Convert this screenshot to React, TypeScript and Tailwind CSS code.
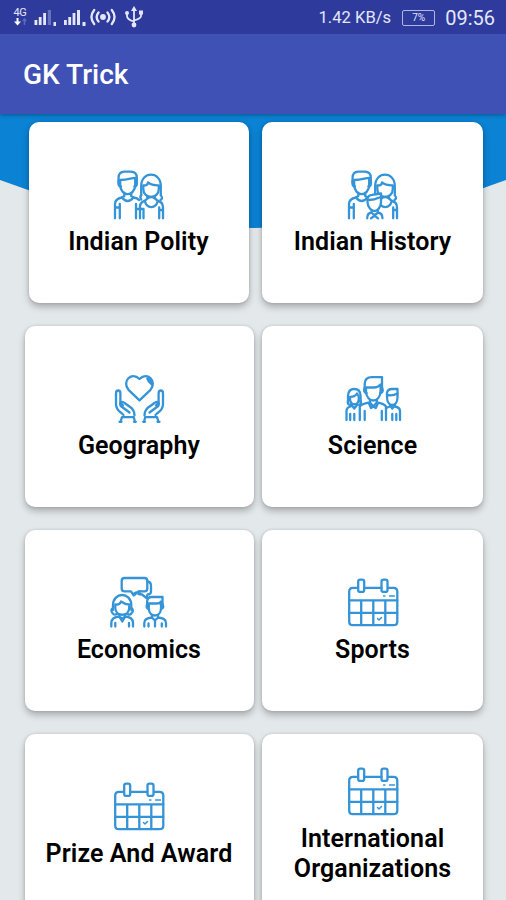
import type { ReactNode } from "react";

interface Topic {
  title: string;
  icon: ReactNode;
  className?: string;
}

function TopicIcon({ children }: { children: ReactNode }) {
  return (
    <svg
      viewBox="0 0 60 52"
      className="h-[52px] w-[60px] shrink-0"
      fill="none"
      stroke="#3594d7"
      strokeWidth="2.3"
      strokeLinecap="round"
      strokeLinejoin="round"
    >
      {children}
    </svg>
  );
}

function Parents() {
  return (
    <>
      <path d="M9.6 14V9.5Q9.6 4 15.3 3.6H22Q27.8 4 27.8 9.5V14" />
      <path d="M11.2 12V17C11.2 23 15.5 26.2 18.7 26.2S26.2 23 26.2 17V9.8C22 10 19 12 11.2 12" />
      <path d="M9.6 12.5Q8.6 18.5 12 18.5M27.8 12.5Q28.8 18.5 25.4 18.5" />
      <path d="M15.3 25V28L13 29.5Q18.5 36.5 24.5 29.5L22.2 28V25" />
      <path d="M13 29.5C7.5 30.5 6 33 6 36V50.3M10.8 50.3V36M6 39.5H10.8M24.5 29.5Q28.5 30.2 30 32" />
      <path d="M32.2 27.5V18C32.2 2.8 51.8 2.8 51.8 18V27.5Q54.5 30 51.5 32" />
      <path d="M34.3 17.3Q38.5 18 39 14.5Q43 17.5 49.8 17.3V21C49.8 31.5 34.3 31.5 34.3 21Z" />
      <path d="M32.2 27Q30.5 29 32.2 31.5M38.3 28.5V30.5L35.8 32.8C37.5 41.2 47 41.2 48.8 32.8L46 30.5V28.5M38.3 30.5Q42.2 27.5 46 30.5" />
      <path d="M49 33Q54 34 54 39.5V50.3M50.2 50.3V39.5M50.2 42H54" />
    </>
  );
}

function CoupleIcon() {
  return (
    <TopicIcon>
      <Parents />
      <path d="M35.8 32.8Q31 34 31 38.5V50.3M27 36V50.3M34.5 41V50.3M27 41H34.5" />
    </TopicIcon>
  );
}

function FamilyIcon() {
  return (
    <TopicIcon>
      <Parents />
      <path
        d="M24.5 34V31Q25 27 29 26.8L38 25.5V34C38 40 34 43 31.5 43S24.5 40 24.5 34Z"
        fill="white"
      />
      <path d="M26 32Q31 32 36.5 29.5M28.6 42V44.5Q31.5 49 34.8 44.5V42M28.6 44.5Q24.2 45 24.2 50.3M34.8 44.5Q39.5 45 39.5 50.3M28 50.3L31.5 47.5L35 50.3" />
    </TopicIcon>
  );
}

function HandsHeartIcon() {
  return (
    <TopicIcon>
      <path d="M30.5 28.3L19.5 17.8C12.5 9.5 22.5-1 30.5 7C38.5-1 48.5 9.5 41.5 17.8Z" />
      <path d="M38.3 6.5Q43 8.5 42.8 12.5L39.8 9.5Z" fill="#3594d7" />
      {[false, true].map((flip) => (
        <g key={String(flip)} transform={flip ? "translate(61 0) scale(-1 1)" : undefined}>
          <path d="M14.5 43C9.5 38.5 7 37 7 32V21.5Q7 18.5 9.2 18.5T11.4 21.5V30.5L14 33.5" />
          <path d="M20.5 40.5L16.5 37.5L11.7 34C10 30.5 13 28.5 15.5 31L22.5 36Q25.5 39 25.5 43.5" />
          <path d="M11.5 49.8L13 45.2H24.8L26 49.8M10.5 49.8H12.5M25 49.8H26.8" />
        </g>
      ))}
    </TopicIcon>
  );
}

function TeamIcon() {
  return (
    <TopicIcon>
      <path d="M21.7 19V12C21.7 7 25 5.2 29 5.2H39V19" />
      <path d="M23 15.5H31Q35 15.5 37.6 12.5V19C37.6 25.5 33.5 28.5 30.3 28.5S23 25.5 23 19Z" />
      <path d="M21.7 15.5Q20 20.5 23.5 21M39 15.5Q41 20.5 37.3 21M27 28V30.5L30.3 34.5L33.8 30.5V28" />
      <path d="M27 30.5Q19 31.5 16.8 34.5V48M33.8 30.5Q41 31.5 43 34.5V48M21.7 39V48M38.8 39V48" />
      <path d="M26 31.5L28 36L30.3 34.5L32.8 36L34.8 31.5" />
      <path d="M5 31V24Q5.2 17 11.3 17T17.6 24V31" />
      <path d="M7 24.8Q12 25 14 21.5L15.8 24.5V27C15.5 34 7.3 34 7 27ZM5 29Q4 33 8 33M17.6 29Q19 32 16 33" />
      <path d="M8.5 33L11.3 36.5L14 33M7.5 34.5Q3.5 35.5 3.5 39V48M7.2 48V42M11.3 42V48" />
      <path d="M44 25V20.5Q45 17 49 17H54.5V25C54.5 31 51.5 33 49.3 33S44 31 44 25Z" />
      <path d="M44 23Q50 24 54.5 21.5M47 33L49.3 36.5L52 33M52 34.5Q57 35.5 57 39V48M53.3 48V42M49.3 42V48M47 34.5L43 36" />
    </TopicIcon>
  );
}

function DiscussionIcon() {
  return (
    <TopicIcon>
      <path d="M15.5 2H35.5Q38.3 2 38.3 4.8V12.5Q38.3 15.3 35.5 15.3H29.5L24.8 19.5L22 15.3H15.5Q12.7 15.3 12.7 12.5V4.8Q12.7 2 15.5 2Z" />
      <path d="M38.3 5.5Q42 6 42 9.5V15.5Q42 18.5 38.5 18.5L37.5 22L33 18.5L29.5 18L31 15.3M24.5 18L27 16.5" />
      <path d="M4 34V29.5C4 15.5 22.3 15.5 22.3 29.5V34" />
      <path d="M6.3 28.5Q11 29 12 25.5Q16 28.5 20.2 28.5V32C20.2 41 6.3 41 6.3 32Z" />
      <path d="M4 32Q.8 34 3.8 37.5Q5 39.5 8 38M22.3 32Q25.5 34 22.3 37.5Q21 39.5 18.5 38M10.5 38.5V40.5Q13.3 44 16 40.5V38.5" />
      <path d="M10.5 40.5Q2.3 41 2.3 47V50.5M16 40.5Q24 41 24 47V50.5M6.3 47V50.5M20 47V50.5M10.5 41L13.3 45.5L16 41" />
      <path d="M38.2 31V25Q38.6 21 42.5 21H53.5V31" />
      <path d="M39.8 27.5H47.5Q51 27.5 52 25.5V32C52 37.5 48.7 39.5 46 39.5S39.8 37.5 39.8 32ZM38.2 28Q36.5 32.5 40 33M53.5 28Q55.5 32.5 52 33" />
      <path d="M43 39V41.5L46 44.5L49 41.5V39M43 41.5Q35.3 42 35.3 47V50.5M49 41.5Q57 42 57 47V50.5M39.5 47.5V50.5M52.8 47.5V50.5M46 44.5V50.5" />
    </TopicIcon>
  );
}

function CalendarIcon() {
  return (
    <TopicIcon>
      <path d="M15 11.8H10Q6.2 11.8 6.2 15.6V45.5Q6.2 49.2 10 49.2H50.5Q54.3 49.2 54.3 45.5V15.6Q54.3 11.8 50.5 11.8H45M21.5 11.8H38.5" />
      <rect x="15.2" y="3.7" width="6" height="12.2" rx="2" />
      <rect x="38.5" y="3.7" width="6" height="12.2" rx="2" />
      <path d="M6.2 24.3H54.3M6.2 36.8H54.3M18.2 24.3V49M30.3 24.3V49M42.3 24.3V49" />
      <path d="M40.5 20H42M46.5 20H51.5" strokeWidth="1.3" />
      <path d="M34.5 42.5L36 44L38.5 41.5" strokeWidth="1.5" />
    </TopicIcon>
  );
}

const topics: Topic[] = [
  { title: "Indian Polity", icon: <CoupleIcon />, className: "ml-1 mr-[5px]" },
  { title: "Indian History", icon: <FamilyIcon /> },
  { title: "Geography", icon: <HandsHeartIcon /> },
  { title: "Science", icon: <TeamIcon /> },
  { title: "Economics", icon: <DiscussionIcon /> },
  { title: "Sports", icon: <CalendarIcon /> },
  { title: "Prize And Award", icon: <CalendarIcon /> },
  { title: "International Organizations", icon: <CalendarIcon /> },
];

function TopicCard({ title, icon, className = "" }: Topic) {
  return (
    <div
      className={`flex flex-col items-center justify-center rounded-[10px] bg-white px-4 shadow-[0_4px_7px_rgba(0,0,0,0.26),0_0_3px_rgba(0,0,0,0.14)] ${className}`}
    >
      {icon}
      <h2 className="mt-[7px] text-center text-[25px] leading-[29.5px] font-semibold tracking-[0.1px] text-black">
        {title}
      </h2>
    </div>
  );
}

function StatusBar() {
  return (
    <div className="flex h-[34px] items-center justify-between bg-[#2e3b9c] pr-[11px] pl-3 text-[#e4e7fa]">
      <div className="flex items-center">
        <div className="flex w-4 flex-col items-center">
          <span className="text-[11px] leading-[10px] tracking-[-0.3px]">4G</span>
          <svg viewBox="0 0 14 8" className="h-2 w-3.5" fill="none" strokeWidth="1.5">
            <path d="M4.5 0V4" stroke="white" strokeWidth="2" />
            <path d="M1 3.5H8L4.5 7.5Z" fill="white" />
            <path d="M11.5 7V1M9.8 3L11.5 1L13.2 3" stroke="#5c69bf" />
          </svg>
        </div>
        <svg viewBox="0 0 54 20" className="ml-1.5 h-5 w-[54px]" fill="currentColor">
          <path d="M.5 13H3.3V18H.5ZM4.8 10H7.6V18H4.8ZM9.2 6H12V18H9.2ZM19.5 15H22V19H19.5Z" />
          <path d="M13.8 3H17V18H13.8Z" fill="#6773c0" />
          <path d="M30 13H32.8V18H30ZM34.3 10H37.1V18H34.3ZM38.6 6H41.4V18H38.6ZM43 3H46V18H43ZM48.5 15H51.5V19H48.5Z" />
        </svg>
        <svg
          viewBox="0 0 26 20"
          className="ml-0.5 h-5 w-[26px]"
          fill="none"
          stroke="currentColor"
          strokeWidth="2.3"
          strokeLinecap="round"
        >
          <circle cx="13" cy="10" r="2.9" fill="currentColor" stroke="none" />
          <path d="M8.5 5.5Q4.8 10 8.5 14.5M17.5 5.5Q21.2 10 17.5 14.5M4.2 3Q-1.3 10 4.2 17M21.8 3Q27.3 10 21.8 17" />
        </svg>
        <svg
          viewBox="0 0 20 22"
          className="ml-2 h-[22px] w-5"
          fill="none"
          stroke="currentColor"
          strokeWidth="1.8"
        >
          <path d="M10 4V19M3 7V10Q3 13.5 10 15.5M17 6.5V10Q17 12.5 10 14.5" />
          <path d="M7 5L10 0L13 5Z" fill="currentColor" stroke="none" />
          <circle cx="10" cy="19" r="2.4" fill="currentColor" stroke="none" />
          <circle cx="3" cy="7" r="2" fill="currentColor" stroke="none" />
          <path d="M15 4.5H19V8.5H15Z" fill="currentColor" stroke="none" />
        </svg>
      </div>
      <div className="flex items-center pt-0.5">
        <span className="text-[16.6px] leading-5">1.42 KB/s</span>
        <span className="ml-[11px] flex h-4 w-[33px] items-center justify-center rounded-[2px] border border-[#aeb6e5] text-[10px] leading-none">
          7%
        </span>
        <span className="ml-[10px] text-[20px] leading-6">09:56</span>
      </div>
    </div>
  );
}

export default function App() {
  return (
    <div className="flex h-[900px] w-[506px] flex-col overflow-hidden bg-[#e3e8eb] font-['Roboto',sans-serif]">
      <header className="z-10 shrink-0 shadow-[0_1px_4px_rgba(0,0,0,0.35)]">
        <StatusBar />
        <div className="flex h-[80px] items-center bg-[#3f51b5] pt-px pl-[23px]">
          <h1 className="text-[28px] leading-8 font-medium text-white">GK Trick</h1>
        </div>
      </header>
      <main className="relative min-h-0 flex-1">
        <svg viewBox="0 0 506 114" className="absolute inset-x-0 top-0 h-[114px] w-full">
          <path d="M0 0H506V66Q253 162 0 66Z" fill="#0b82d3" />
        </svg>
        <div className="relative grid auto-rows-[181.5px] grid-cols-[229px_221px] gap-x-[8.5px] gap-y-[22.5px] pt-[7.5px] pl-[24.5px]">
          {topics.map((topic) => (
            <TopicCard key={topic.title} {...topic} />
          ))}
        </div>
      </main>
    </div>
  );
}
